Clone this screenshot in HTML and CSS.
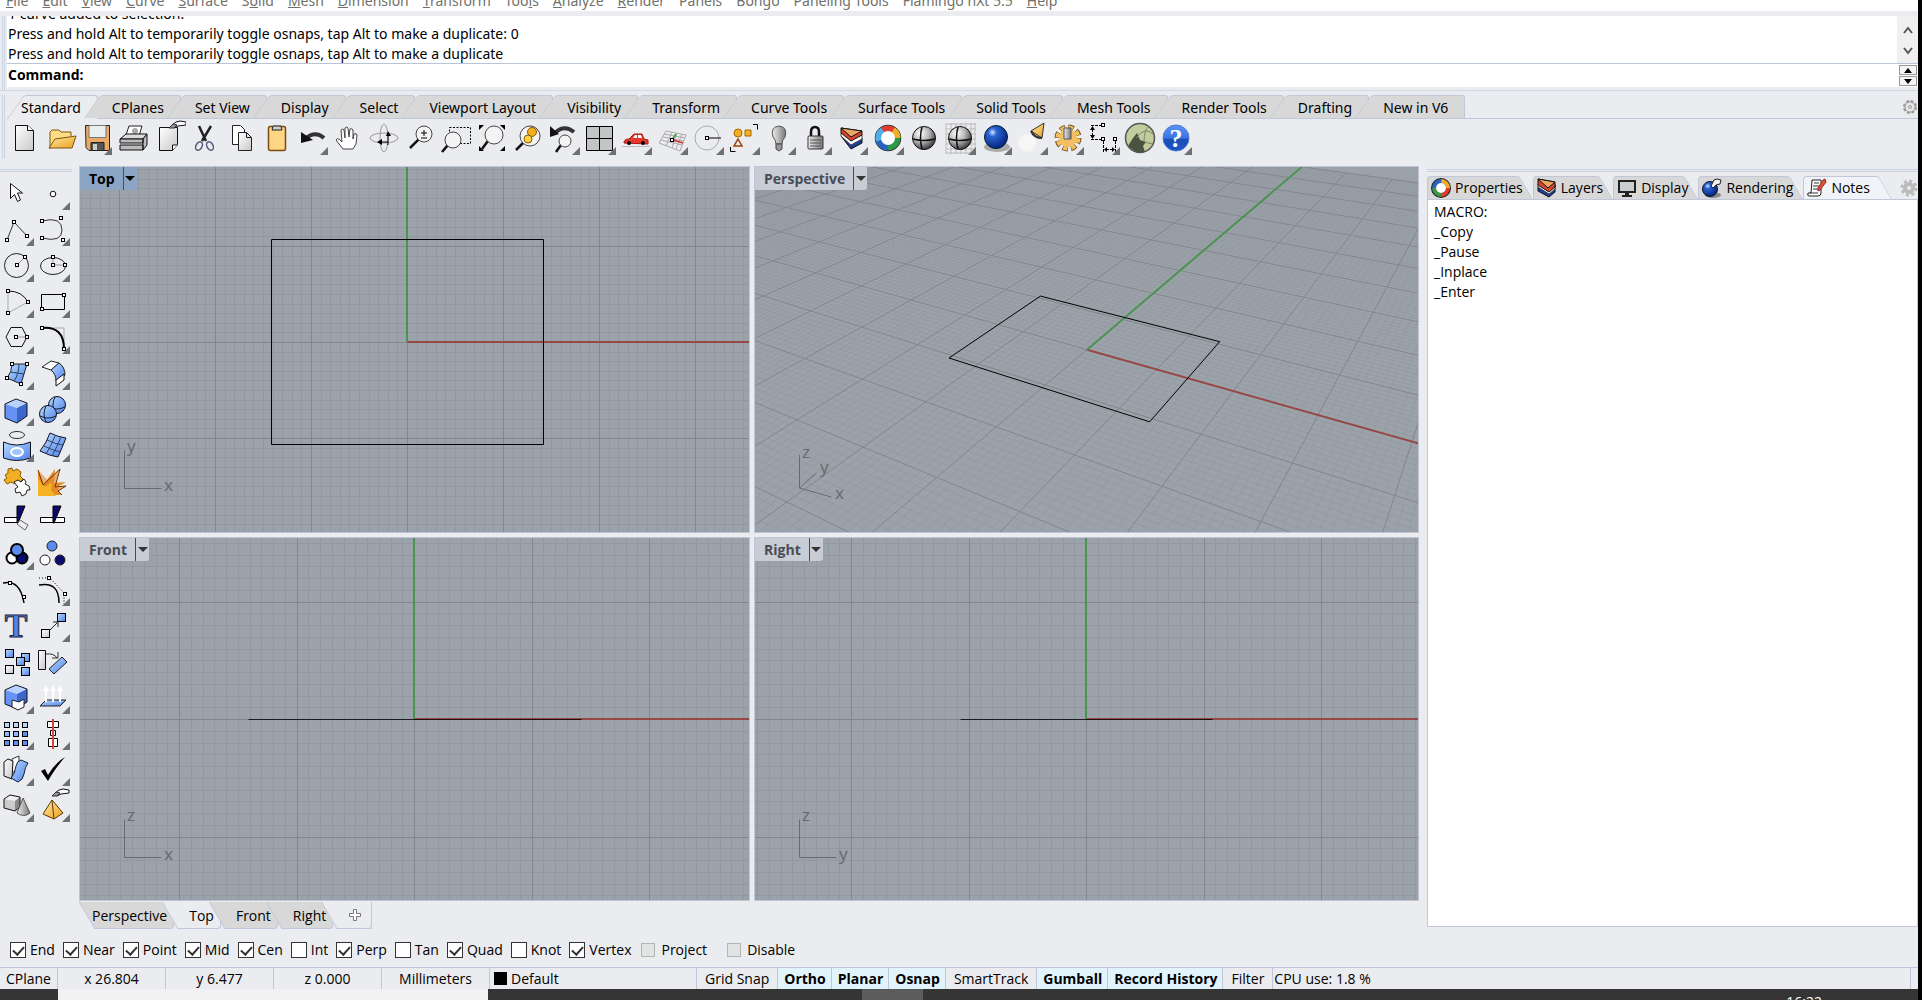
FILE: index.html
```html
<!DOCTYPE html>
<html lang="en">
<head>
<meta charset="utf-8">
<meta name="viewport" content="width=device-width, initial-scale=1">
<title>Rhino</title>
<link rel="stylesheet" href="styles.css">
</head>
<body>
<svg class="defs" width="0" height="0" aria-hidden="true">
  <defs>
    <linearGradient id="gray" x1="0" y1="0" x2="1" y2="1"><stop offset="0" stop-color="#fff"/><stop offset="1" stop-color="#c8c8c8"/></linearGradient>
    <linearGradient id="steel" x1="0" y1="0" x2="1" y2="0"><stop offset="0" stop-color="#eee"/><stop offset="1" stop-color="#777"/></linearGradient>
    <linearGradient id="blue" x1="0" y1="0" x2="1" y2="1"><stop offset="0" stop-color="#b9dcff"/><stop offset="1" stop-color="#4f80ea"/></linearGradient>
    <linearGradient id="gold" x1="0" y1="0" x2="1" y2="1"><stop offset="0" stop-color="#ffe9a6"/><stop offset="1" stop-color="#eda01c"/></linearGradient>
    <linearGradient id="help" x1="0" y1="0" x2="0" y2="1"><stop offset="0" stop-color="#5d93f5"/><stop offset=".5" stop-color="#3a74df"/><stop offset=".55" stop-color="#1b4fb8"/><stop offset="1" stop-color="#1c56c4"/></linearGradient>
    <radialGradient id="ballgray" cx=".35" cy=".3" r=".75"><stop offset="0" stop-color="#fff"/><stop offset=".5" stop-color="#b5b5b5"/><stop offset="1" stop-color="#333"/></radialGradient>
    <radialGradient id="ballblue" cx=".35" cy=".3" r=".75"><stop offset="0" stop-color="#cfe2ff"/><stop offset=".25" stop-color="#2a62d0"/><stop offset="1" stop-color="#04207a"/></radialGradient>
  </defs>
</svg>

<nav class="menubar">
  <a href="#"><u>F</u>ile</a>
  <a href="#"><u>E</u>dit</a>
  <a href="#"><u>V</u>iew</a>
  <a href="#"><u>C</u>urve</a>
  <a href="#"><u>S</u>urface</a>
  <a href="#">S<u>o</u>lid</a>
  <a href="#"><u>M</u>esh</a>
  <a href="#"><u>D</u>imension</a>
  <a href="#"><u>T</u>ransform</a>
  <a href="#">Too<u>l</u>s</a>
  <a href="#"><u>A</u>nalyze</a>
  <a href="#"><u>R</u>ender</a>
  <a href="#">Panels</a>
  <a href="#">Bongo</a>
  <a href="#">Paneling Tools</a>
  <a href="#">Flamingo nXt 5.5</a>
  <a href="#"><u>H</u>elp</a>
</nav>

<section class="command">
  <div class="history">
    <div class="lines">
      <p>1 curve added to selection.</p>
      <p>Press and hold Alt to temporarily toggle osnaps, tap Alt to make a duplicate: 0</p>
      <p>Press and hold Alt to temporarily toggle osnaps, tap Alt to make a duplicate</p>
    </div>
    <div class="scroll">
      <button aria-label="Scroll up"><svg width="12" height="8"><path d="M2 7L6 2L10 7"/></svg></button>
      <button aria-label="Scroll down"><svg width="12" height="8"><path d="M2 1L6 6L10 1"/></svg></button>
    </div>
  </div>
  <div class="prompt">
    <label for="cmd">Command:</label>
    <input id="cmd" type="text">
    <div class="spin">
      <button aria-label="Previous"><svg width="8" height="5"><path d="M0 5L4 0L8 5z"/></svg></button>
      <button aria-label="Next"><svg width="8" height="5"><path d="M0 0L4 5L8 0z"/></svg></button>
    </div>
  </div>
</section>

<section class="toolbars">
  <div class="tabs top-tabs">
    <button class="tab active">Standard</button>
    <button class="tab">CPlanes</button>
    <button class="tab">Set View</button>
    <button class="tab">Display</button>
    <button class="tab">Select</button>
    <button class="tab">Viewport Layout</button>
    <button class="tab">Visibility</button>
    <button class="tab">Transform</button>
    <button class="tab">Curve Tools</button>
    <button class="tab">Surface Tools</button>
    <button class="tab">Solid Tools</button>
    <button class="tab">Mesh Tools</button>
    <button class="tab">Render Tools</button>
    <button class="tab">Drafting</button>
    <button class="tab">New in V6</button>
    <button class="options" aria-label="Toolbar options"><svg width="16" height="16" viewBox="0 0 16 16"><circle cx="8" cy="8" r="6" fill="none" stroke="#999" stroke-width="2" stroke-dasharray="3 1.7"/><circle cx="8" cy="8" r="5" fill="#e8e8e8" stroke="#999"/><circle cx="8" cy="8" r="1.5" fill="none" stroke="#999"/></svg></button>
  </div>
  <div class="toolbar" id="toolbar"></div>
</section>

<main class="work">
  <aside class="sidebar"><div class="tools" id="tools"></div></aside>

  <div class="center">
    <div class="viewports">
      <section class="viewport active">
        <svg class="scene" id="top"></svg>
        <div class="title"><button>Top</button><button class="drop" aria-label="Top menu"></button></div>
      </section>
      <section class="viewport">
        <svg class="scene" id="perspective"></svg>
        <div class="title"><button>Perspective</button><button class="drop" aria-label="Perspective menu"></button></div>
      </section>
      <section class="viewport">
        <svg class="scene" id="front"></svg>
        <div class="title"><button>Front</button><button class="drop" aria-label="Front menu"></button></div>
      </section>
      <section class="viewport">
        <svg class="scene" id="right"></svg>
        <div class="title"><button>Right</button><button class="drop" aria-label="Right menu"></button></div>
      </section>
    </div>
    <div class="tabs view-tabs">
      <button class="tab">Perspective</button>
      <button class="tab active">Top</button>
      <button class="tab">Front</button>
      <button class="tab">Right</button>
      <button class="tab add" aria-label="New viewport"><svg width="12" height="12" viewBox="0 0 12 12"><path d="M4.500.5h3v4h4v3h-4v4h-3v-4h-4v-3h4z" fill="#fff" stroke="#777"/></svg></button>
    </div>
  </div>

  <aside class="panel">
    <div class="tabs panel-tabs">
      <button class="tab"><svg width="20" height="20" viewBox="0 0 20 20"><g fill="none" stroke-width="4"><circle cx="10" cy="10" r="7" stroke="#222" stroke-width="6"/><circle cx="10" cy="10" r="7" stroke="#e23b2e" stroke-dasharray="11 33"/><circle cx="10" cy="10" r="7" stroke="#3b9a45" stroke-dasharray="11 33" stroke-dashoffset="-11"/><circle cx="10" cy="10" r="7" stroke="#2b63c4" stroke-dasharray="11 33" stroke-dashoffset="-22"/><circle cx="10" cy="10" r="7" stroke="#f0ad28" stroke-dasharray="11 33" stroke-dashoffset="-33"/></g><circle cx="10" cy="10" r="5" fill="#fff"/></svg>Properties</button>
      <button class="tab"><svg width="20" height="20" viewBox="0 0 20 20"><path d="M1 8v5l11 6 6-5V7z" fill="#1d3f9c" stroke="#111"/><path d="M1 6v3l11 7 6-5V6z" fill="#fff" stroke="#444"/><path d="M1 1v6l11 7 6-5V4z" fill="#d8432b" stroke="#111"/><path d="M1 1l10 9 7-6z" fill="#f0a55d" stroke="#111"/></svg>Layers</button>
      <button class="tab"><svg width="20" height="20" viewBox="0 0 20 20"><path d="M1 2h18v13H1z" fill="#222"/><path d="M3 4h14v9H3z" fill="#c9ced0"/><path d="M8 15h4v2h3v2H5v-2h3z" fill="#222"/></svg>Display</button>
      <button class="tab"><svg width="20" height="20" viewBox="0 0 20 20"><ellipse cx="11" cy="17" rx="8" ry="3" fill="#888"/><circle cx="8" cy="11" r="7.500" fill="url(#ballblue)" stroke="#112"/><path d="M9 8l3-6 3-1 4 1-1 4-4 1-3 3z" fill="#eee" stroke="#222"/></svg>Rendering</button>
      <button class="tab active"><svg width="20" height="20" viewBox="0 0 20 20"><path d="M5 2h9v13q0 3-3 3H2q-2 0-1-3h3z" fill="#fff" stroke="#222"/><path d="M7 5h5M6 8h6M6 11h5M3 15h8" stroke="#333" fill="none"/><path d="M18 1l1 3-6 8-2 1 0-3 5-8z" fill="#e0562a" stroke="#923"/></svg>Notes</button>
      <button class="options" aria-label="Panel options"><svg width="18" height="18" viewBox="0 0 18 18"><circle cx="9" cy="9" r="7" fill="none" stroke="#bbb" stroke-width="3" stroke-dasharray="3 2.5"/><circle cx="9" cy="9" r="4" fill="none" stroke="#bbb" stroke-width="4"/></svg></button>
    </div>
    <textarea class="notes" aria-label="Notes" spellcheck="false">MACRO:
_Copy
_Pause
_Inplace
_Enter</textarea>
  </aside>
</main>

<section class="osnap">
  <label><input type="checkbox" checked>End</label>
  <label><input type="checkbox" checked>Near</label>
  <label><input type="checkbox" checked>Point</label>
  <label><input type="checkbox" checked>Mid</label>
  <label><input type="checkbox" checked>Cen</label>
  <label><input type="checkbox">Int</label>
  <label><input type="checkbox" checked>Perp</label>
  <label><input type="checkbox">Tan</label>
  <label><input type="checkbox" checked>Quad</label>
  <label><input type="checkbox">Knot</label>
  <label><input type="checkbox" checked>Vertex</label>
  <label class="dim"><input type="checkbox">Project</label>
  <label class="dim"><input type="checkbox">Disable</label>
</section>

<footer class="status">
  <button class="plane">CPlane</button>
  <span class="coord">x 26.804</span>
  <span class="coord">y 6.477</span>
  <span class="coord">z 0.000</span>
  <button class="coord">Millimeters</button>
  <button class="layer"><i></i>Default</button>
  <button>Grid Snap</button>
  <button class="on">Ortho</button>
  <button class="on">Planar</button>
  <button class="on">Osnap</button>
  <button>SmartTrack</button>
  <button class="on">Gumball</button>
  <button class="on">Record History</button>
  <button>Filter</button>
  <span class="cpu">CPU use: 1.8 %</span>
</footer>

<div class="taskbar">
  <div class="search"></div>
  <div class="current"></div>
  <time>16:22</time>
</div>
<script src="script.js"></script>
</body>
</html>
```
FILE: styles.css
```css
* {
  box-sizing: border-box;
}
body {
  margin: 0;
  height: 100vh;
  display: flex;
  flex-direction: column;
  border-right: 4px solid #000;
  background: #ebecf0;
  color: #000;
  font: 14px/20px "Open Sans", "Noto Sans", sans-serif;
  overflow: hidden;
}
button, input, textarea {
  font: inherit;
  color: inherit;
  background: none;
  border: 0;
  padding: 0;
  margin: 0;
}
.defs {
  position: absolute;
}
.menubar, .lines, .top-tabs {
  font-family: "Noto Sans", "Open Sans", sans-serif;
}

/* menu */
.menubar {
  display: flex;
  flex: none;
  align-items: flex-end;
  gap: 14px;
  height: 11px;
  padding-left: 6px;
  background: #fff;
  overflow: hidden;
}
.menubar a {
  color: #70716c;
  text-decoration: none;
  white-space: nowrap;
}

/* command line */
.command {
  flex: none;
  margin-top: 5px;
  padding-left: 7px;
  padding-bottom: 3px;
  border-bottom: 1px solid #d4d8e4;
  background: linear-gradient(90deg, transparent 2px, #c9d3e2 2px, #c9d3e2 3px, transparent 3px, transparent 4px, #c9d3e2 4px, #c9d3e2 5px, transparent 5px);
}
.history {
  display: flex;
  height: 48px;
  background: #fff;
  border-bottom: 1px solid #b9c4d6;
}
.lines {
  flex: 1;
  display: flex;
  flex-direction: column;
  justify-content: flex-end;
  overflow: hidden;
  margin-bottom: -1px;
  padding-left: 1px;
}
.lines p {
  margin: 0;
  flex: none;
}
.scroll {
  width: 21px;
  display: flex;
  flex-direction: column;
  justify-content: space-between;
  padding: 3px 0;
  background: #f0f0f0;
}
.scroll path {
  fill: none;
  stroke: #555;
  stroke-width: 2;
}
.prompt {
  display: flex;
  height: 23px;
  padding-left: 1px;
  background: #fff;
}
.prompt label {
  font-weight: bold;
  line-height: 22px;
}
.prompt input {
  flex: 1;
  outline: 0;
}
.spin {
  width: 20px;
  padding: 1px;
  display: flex;
  flex-direction: column;
  gap: 1px;
}
.spin button {
  height: 10px;
  border: 1px solid #999;
  background: #f4f4f4;
  line-height: 0;
}

/* tabs: a slanted half and a straight half behind the text */
.tabs {
  display: flex;
}
.tab {
  position: relative;
  isolation: isolate;
  white-space: nowrap;
}
.tab::before, .tab::after {
  content: "";
  position: absolute;
  z-index: -1;
  top: 0;
  bottom: 0;
  background: #d8d8d8;
  border: 0 solid #bfc7d9;
}
.tab.active::before, .tab.active::after {
  background: #ebecf0;
}
.options {
  margin-left: auto;
  line-height: 0;
}

.toolbars {
  flex: none;
  padding: 4px 0 10px 7px;
  background: linear-gradient(90deg, transparent 2px, #c9d3e2 2px, #c9d3e2 3px, transparent 3px, transparent 4px, #c9d3e2 4px, #c9d3e2 5px, transparent 5px) 0 4px / 100% 64px no-repeat;
}
.top-tabs {
  border-bottom: 1px solid #bfc7d9;
  height: 24px;
}
.top-tabs .tab {
  padding: 2px 17px 0 14px;
}
.top-tabs .active {
  margin-bottom: -1px;
}
.top-tabs .tab::before {
  left: -14px;
  width: 44px;
  border-width: 1px 0 0 1px;
  border-radius: 3px 0 0 0;
  transform: skewX(-35deg);
  transform-origin: bottom;
}
.top-tabs .tab:first-child::before {
  left: 0;
}
.top-tabs .tab::after {
  left: 28px;
  right: 0;
  border-width: 1px 1px 0 0;
  border-radius: 0 3px 0 0;
}
.toolbar {
  display: flex;
  margin-left: -1px;
  padding-top: 1px;
}
.tool {
  width: 36px;
  height: 36px;
  line-height: 0;
}
.tool svg {
  width: 36px;
  height: 36px;
}

/* work area */
.work {
  flex: 1;
  min-height: 0;
  display: flex;
}
.sidebar {
  flex: none;
  width: 79px;
  padding-top: 3px;
}
.tools {
  display: grid;
  grid-template-columns: 36px 36px;
  border-top: 1px solid #c9d3e2;
  padding-top: 5px;
  margin-right: 7px;
  box-shadow: inset 0 1px #ebecf0, inset 0 2px #c9d3e2;
}
.center {
  flex: 1;
  display: flex;
  flex-direction: column;
  min-width: 0;
}
.viewports {
  flex: 1;
  min-height: 0;
  display: grid;
  grid-template-columns: 671fr 665fr;
  grid-template-rows: 367fr 364fr;
  gap: 4px;
}
.viewport {
  position: relative;
  min-width: 0;
  min-height: 0;
  border: 1px solid #bfc5d6;
  background: #9ca2a9;
  overflow: hidden;
}
.scene {
  position: absolute;
  inset: 0;
  width: 100%;
  height: 100%;
}
.scene text {
  font: 17px "Noto Sans", sans-serif;
  fill: #696b70;
}
.title {
  position: relative;
  display: inline-flex;
  height: 23px;
  background: #c8cdd5;
  color: #494c57;
  border-radius: 0 0 3px 0;
}
.title button {
  padding: 0 8px 0 9px;
  font-weight: bold;
  line-height: 22px;
}
.title .drop {
  width: 14px;
  padding: 0;
  display: flex;
  justify-content: center;
  align-items: center;
  border-left: 1px solid #494c57;
}
.drop::before {
  content: "";
  border: 5px solid transparent;
  border-top-color: #333;
  border-bottom: 0;
}
.active .title {
  background: #8ca5c4;
  color: #000;
}
.active .drop::before {
  border-top-color: #000;
}
.view-tabs {
  flex: none;
  height: 29px;
  padding-top: 1px;
}
.view-tabs .tab {
  height: 27px;
  padding: 1px 7px 0 15px;
}
.view-tabs .tab::before {
  left: -12px;
  width: 34px;
  border-width: 0 0 1px 1px;
  transform: skewX(30deg);
  transform-origin: top;
}
.view-tabs .tab:first-child::before {
  left: 0;
}
.view-tabs .tab:first-child {
  padding-left: 13px;
}
.view-tabs .tab::after {
  left: 20px;
  right: 0;
  border-width: 0 1px 1px 0;
  border-radius: 0 0 4px 0;
}
.view-tabs .add::before, .view-tabs .add::after {
  background: #ebecf0;
}
.view-tabs .add {
  padding: 0 11px 0 16px;
}

/* right panel */
.panel {
  flex: none;
  width: 491px;
  margin-left: 8px;
  padding-top: 3px;
  display: flex;
  flex-direction: column;
  padding-bottom: 3px;
}
.panel-tabs {
  padding-top: 6px;
  height: 30px;
  border-top: 1px solid #c9d3e2;
  box-shadow: inset 0 1px #ebecf0, inset 0 2px #c9d3e2;
}
.panel-tabs .tab {
  display: flex;
  align-items: center;
  gap: 4px;
  padding: 0 10px 0 4px;
}
.panel-tabs .tab::before {
  right: 0;
  width: 40px;
  border-width: 1px 1px 0 0;
  border-radius: 0 3px 0 0;
  transform: skewX(30deg);
  transform-origin: bottom;
}
.panel-tabs .tab::after {
  left: 0;
  right: 24px;
  border-width: 1px 0 0 1px;
  border-radius: 4px 0 0 0;
}
.panel-tabs .active {
  padding-right: 22px;
}
.panel-tabs .active::before, .panel-tabs .active::after {
  background: #f1f3f8;
}
.notes {
  flex: 1;
  padding: 2px 6px;
  background: #fff;
  border: 1px solid #bfc7d9;
  resize: none;
  outline: 0;
}

/* osnap */
.osnap {
  flex: none;
  height: 37px;
  padding: 2px 0 0 10px;
  display: flex;
  align-items: center;
  gap: 8px;
}
.osnap label {
  display: flex;
  align-items: center;
  gap: 4px;
}
.osnap input {
  appearance: none;
  width: 16px;
  height: 16px;
  border: 1px solid #333;
  background: #fff;
}
.osnap input:checked::before {
  content: "";
  display: block;
  width: 9px;
  height: 5px;
  margin: 3px 0 0 2px;
  border: solid #333;
  border-width: 0 0 2px 2px;
  transform: rotate(-48deg);
}
.osnap .dim input {
  width: 14px;
  height: 14px;
  border-color: #b4b6b4;
  background: #e2e3e3;
}
.osnap .dim {
  margin-left: 2px;
  margin-right: 10px;
  gap: 6px;
}

/* status bar */
.status {
  flex: none;
  display: flex;
  height: 22px;
  border-top: 1px solid #c0c5d9;
  line-height: 22px;
  padding-right: 7px;
}
.status > * {
  padding: 0 8px;
  border-right: 1px solid #c0c5d9;
  text-align: center;
  white-space: nowrap;
}
.status .plane {
  width: 58px;
  padding: 0;
}
.status .coord {
  width: 108px;
}
.status .layer {
  width: 207px;
  padding: 0 4px;
  display: flex;
  align-items: center;
  gap: 4px;
}
.layer i {
  width: 13px;
  height: 13px;
  background: #000;
}
.status .on {
  padding: 0 5px 0 6px;
  font-weight: bold;
  background: #e1f3fb;
}
.status .cpu {
  flex: 1;
  padding: 0 1px;
  text-align: left;
}
.taskbar {
  flex: none;
  height: 11px;
  display: flex;
  padding-left: 58px;
  background: #353535;
  overflow: hidden;
}
.search {
  width: 430px;
  background: #f1f1f1;
}
.current {
  width: 61px;
  margin-left: 374px;
  background: #5c5c5c;
}
.taskbar time {
  margin-left: auto;
  margin-right: 96px;
  padding-top: 3px;
  color: #fff;
}
```
FILE: script.js
```js
// small white grip square
function grip(x, y) {
  return `<rect x="${x - 1.5}" y="${y - 1.5}" width="3" height="3" fill="#fff" stroke="#000"/>`;
}
const flyout = '<path d="M34 27v8h-8z" fill="#6f7074"/>';
const glass = (x, y, r, hx, hy) =>
  `<path d="M${x - r * 0.7} ${y + r * 0.7}L${hx} ${hy}" stroke="#111" stroke-width="2.500"/><circle cx="${x}" cy="${y}" r="${r}" fill="#f4f4f4" stroke="#444"/>`;
const ball = '<circle cx="18" cy="18" r="11.500" fill="url(#ballgray)" stroke="#111"/><path d="M7 19q11 3 22 0M16 7q-3 11 0 22" fill="none" stroke="#111" stroke-width="1.500"/>';
const hand = '<path d="M16 6l5-4 4-1 6 1v3l-8 1-4 2z" fill="#fff" stroke="#111"/><path d="M14 8l4-4 4 1-3 3z" fill="#999" stroke="#333"/>';

// [name, drawing, has flyout]
const toolbar = [
  ["New", '<path d="M9.500 5.500h12l6 5v20h-18z" fill="url(#gray)" stroke="#111"/><path d="M21.500 5.500v5h6" fill="#fff" stroke="#111"/>'],
  ["Open", '<path d="M8 29V12l2-2h7l2 2h10v4" fill="#ffdc86" stroke="#7a5510"/><path d="M7 28l6-9 21-3-4 12z" fill="url(#gold)" stroke="#7a5510"/>'],
  ["Save", '<path d="M7.500 5.500h24v25H11l-3-3z" fill="#e8aa66" stroke="#222"/><path d="M11 5.500h17v12H11z" fill="#e9eeee" stroke="#777"/><path d="M13 22.500h13v8H13z" fill="#555" stroke="#222"/><path d="M15 24h4v6h-4z" fill="#ccc"/>', 1],
  ["Print", '<path d="M12 15l3-9h13l-3 10z" fill="#fff" stroke="#222"/><circle cx="21" cy="11" r="3" fill="#aaa"/><path d="M6 19l6-5h21l-4 5z" fill="#ddd" stroke="#111"/><path d="M6 19h23v4H6zM6 25h23v5H6zM29 19l4-5v11l-4 5z" fill="#bbb" stroke="#111"/>'],
  ["Properties", '<path d="M9.500 7.500h18v17l-5 6h-13z" fill="url(#gray)" stroke="#111"/><path d="M22.500 30v-5h5" fill="#fff" stroke="#111"/>' + '<g transform="translate(5 0)">' + hand + '</g>'],
  ["Cut", '<path d="M13 6l7 15M25 6l-9 15" stroke="#222" stroke-width="2.500"/><g fill="none" stroke="#557" stroke-width="1.500"><ellipse cx="13" cy="26" rx="3" ry="4.500" transform="rotate(30 13 26)"/><ellipse cx="24" cy="26" rx="3" ry="4.500" transform="rotate(-30 24 26)"/></g>'],
  ["Copy", '<path d="M10.500 5.500h8l4 4v15h-12z" fill="#fff" stroke="#222"/><path d="M16.500 12.500h8l5 5v13h-13z" fill="url(#gray)" stroke="#222"/><path d="M24.500 12.500v5h5" fill="none" stroke="#222"/>'],
  ["Paste", '<rect x="10.500" y="6.500" width="17" height="24" rx="2" fill="#ffd684" stroke="#7a4a10" stroke-width="1.500"/><path d="M14 10l1-4h8l1 4z" fill="#ccc" stroke="#222"/>'],
  ["Undo", '<path d="M11 19q10-9 19-1" fill="none" stroke="#333" stroke-width="4"/><path d="M7 12v11l12-3z" fill="#111"/>', 1],
  ["Pan", '<path d="M13 29l-7-9q1-3 4 0l2 2-1-12q2-2 3 0l1 8V8q2-2 3 0l1 9 1-8q2-1 3 1v9l1-5q3-1 3 1l-1 9-3 5z" fill="#fff" stroke="#444"/>'],
  ["Rotate view", '<g fill="none" stroke="#999"><ellipse cx="18" cy="18" rx="14" ry="5"/><ellipse cx="18" cy="18" rx="4" ry="14"/></g><path d="M14 22h8M22 25V14" stroke="#000"/><path d="M16 19v6l-5-3zM20 16h5l-3-5z"/>'],
  ["Zoom dynamic", glass(22, 14, 8, 8, 28) + '<path d="M19 13h6M22 10v6M19 18h6" stroke="#000"/>'],
  ["Zoom window", '<path d="M11.500 7.500h21v16h-21z" fill="none" stroke="#000" stroke-dasharray="2 1.500"/>' + glass(15, 20, 8, 4, 32)],
  ["Zoom extents", '<path d="M5 5h5l-5 5zM31 5h-5l5 5zM5 31h5l-5-5zM31 31h-5l5-5z"/>' + glass(20, 15, 9, 8, 29)],
  ["Zoom selected", glass(20, 16, 10, 6, 30) + '<circle cx="22" cy="12" r="4.500" fill="#f2b01e" stroke="#8a5a00"/><circle cx="18" cy="19" r="4" fill="#ffd24a" stroke="#8a5a00"/>'],
  ["Undo view", '<path d="M9 13q9-9 19-1" fill="none" stroke="#333" stroke-width="4"/><path d="M4 6v11l9-3z" fill="#111"/>' + glass(19, 21, 6, 10, 32), 1],
  ["4 View", '<path d="M4.500 6.500h26v24h-26z" fill="#c3c5c4" stroke="#000"/><path d="M17.500 6.500v24M4.500 18.500h26" stroke="#000"/>', 1],
  ["Car", '<path d="M4 26.500h28" stroke="#bbb"/><path d="M6 23q0-4 5-4l5-5h8l2 5 4 1v4z" fill="#e8382d" stroke="#a11"/><path d="M17 15h2v3h-4zM20 15h3l1 3h-4z" fill="#fff"/><circle cx="11" cy="23" r="2"/><circle cx="25" cy="23" r="2"/>', 1],
  ["CPlane", '<path d="M12 11l20 4-6 16-21-8zM7 20l21 5M9 17l21 4M10 14l21 4M18 12l-6 14M23 13l-5 15M28 14l-6 15" fill="none" stroke="#aaa"/><path d="M18 20l4-6" stroke="#3a9a3a" stroke-width="1.500"/><path d="M19 20l10 3" stroke="#c33" stroke-width="1.500"/>' + grip(18, 20), 1],
  ["Circle center", '<circle cx="17" cy="18" r="12" fill="none" stroke="#aaa"/><path d="M18 18h13" stroke="#000"/>' + grip(17, 18), 1],
  ["Select", '<path d="M27 4.500h4.500v5M4.500 27v4.500h5" fill="none" stroke="#000"/><circle cx="12" cy="13" r="4" fill="#f2b01e" stroke="#a60"/><path d="M19 10h6v6h-6z" fill="#f2b01e" stroke="#a60"/><path d="M12 19l4 7H8z" fill="none" stroke="#a04000" stroke-width="1.500"/>', 1],
  ["Lights", '<path d="M14 24q0-4-3-7-3-10 6-11 9 1 6 11-3 3-3 7z" fill="url(#steel)" stroke="#555"/><path d="M14 24h6v5l-3 2-3-2z" fill="#999" stroke="#444"/>', 1],
  ["Lock", '<path d="M13 17v-5q0-5 4-5t4 5v5" fill="none" stroke="#111" stroke-width="2.500"/><rect x="10" y="16" width="15" height="13" rx="1" fill="url(#steel)" stroke="#333"/><path d="M12 20h11M12 23h11M12 26h11" stroke="#555"/>', 1],
  ["Layers", '<path d="M7 16l10 13 11-6v-5L17 20z" fill="#1d3f9c" stroke="#111"/><path d="M7 13v3l10 9 11-6v-4z" fill="#fff" stroke="#444"/><path d="M7 8v5l10 8 11-6v-4z" fill="#d8432b" stroke="#111"/><path d="M7 8l10 9 11-6z" fill="#e9a765" stroke="#111"/>', 1],
  ["Color wheel", '<g fill="none" stroke-width="6"><circle cx="18" cy="18" r="9.500" stroke="#222" stroke-width="7.500"/><circle cx="18" cy="18" r="9.500" stroke="#2a9a4a"/><circle cx="18" cy="18" r="9.500" stroke="#2b63c4" stroke-dasharray="15 45" stroke-dashoffset="-15"/><circle cx="18" cy="18" r="9.500" stroke="#52aee8" stroke-dasharray="12 48" stroke-dashoffset="-27"/><circle cx="18" cy="18" r="9.500" stroke="#e23b2e" stroke-dasharray="12 48" stroke-dashoffset="-39"/><circle cx="18" cy="18" r="9.500" stroke="#f0ad28" stroke-dasharray="10 50" stroke-dashoffset="-50"/></g><circle cx="18" cy="18" r="7" fill="#fff"/>', 1],
  ["Shade", ball],
  ["Shade options", '<path d="M4 4h30M4 9h30M4 14h30M4 19h30M4 24h30M4 29h30M4 33h30M4 3v31M9 3v31M14 3v31M19 3v31M24 3v31M29 3v31M33 3v31" stroke="#bbb"/>' + ball, 1],
  ["Render", '<ellipse cx="19" cy="27" rx="13" ry="5" fill="#aaa"/><circle cx="18" cy="17" r="11.500" fill="url(#ballblue)" stroke="#023"/>', 1],
  ["Spotlight", '<circle cx="13" cy="23" r="9" fill="#f6f6f4"/><path d="M17 11l13-8-2 15z" fill="url(#gold)" stroke="#333"/><path d="M17 11q3 7 11 7" fill="none" stroke="#333" stroke-width="2"/>', 1],
  ["Options", '<circle cx="18" cy="18" r="10" fill="none" stroke="#754f16" stroke-width="7" stroke-dasharray="5 2.854"/><circle cx="18" cy="18" r="10" fill="none" stroke="#f2c063" stroke-width="5" stroke-dasharray="4 3.854" stroke-dashoffset="-.5"/><circle cx="18" cy="18" r="9" fill="#f2c063"/><path d="M14 8h7v11h-7z" fill="url(#steel)" stroke="#555"/>', 1],
  ["Dimension", '<path d="M5 5.500h10M5 19.500h10M6.500 9v7M17.500 21v12M29.500 21v12M20 29.500h7" fill="none" stroke="#000" stroke-dasharray="3 1"/><path d="M4 10l2.500-4L9 10zM4 15l2.500 4L9 15zM21 27v5l-3-2.500zM26 27v5l3-2.500z"/>' + grip(17, 5) + grip(17, 19) + grip(29, 19), 1],
  ["Grasshopper", '<circle cx="18" cy="18" r="14.500" fill="#c2cc9c" stroke="#555" stroke-width="1.500"/><path d="M6 26l5-8 4-5 3 7 6 2-3 4 2 6-9 0z" fill="#4a5240"/><path d="M14 18q9-12 17-4M22 22q0-12 5-16M22 22l9 2" fill="none" stroke="#7c8768"/>'],
  ["Help", '<circle cx="18" cy="18" r="13" fill="url(#help)" stroke="#4a7ad8"/><text x="18" y="27" text-anchor="middle" font-family="Liberation Serif" font-weight="bold" font-size="26" fill="#fff">?</text>', 1],
];

const cube = (x, y, a, b, c) =>
  `<path d="M${x} ${y + 5}l11-5 11 4-10 5z" fill="${a}"/><path d="M${x} ${y + 5}l12 4v15l-12-5z" fill="${b}"/><path d="M${x + 12} ${y + 9}l10-5v13l-10 7z" fill="${c}"/><path d="M${x} ${y + 5}l11-5 11 4v13l-10 7-12-5z" fill="none" stroke="#112"/>`;
const box = (x, y, f) => `<rect x="${x}.5" y="${y}.5" width="8" height="8" fill="${f}" stroke="#000"/>`;
const globe = (x, y) => `<circle cx="${x}" cy="${y}" r="8.500" fill="url(#blue)" stroke="#112"/><path d="M${x - 8} ${y + 2}q8 4 16 0M${x - 2} ${y - 8}q-4 8 0 16" fill="none" stroke="#123"/>`;

const tools = [
  ["Select", '<path d="M10.500 8.500v15l4-4 3 7 3-1.500-3-7h5z" fill="#fff" stroke="#111"/>'],
  ["Point", '<circle cx="17" cy="19" r="2.800" fill="#fff" stroke="#111"/>', 1],
  ["Polyline", '<path d="M7 29L14 11L27 25" fill="none" stroke="#333"/>' + grip(7, 29) + grip(14, 11) + grip(27, 25), 1],
  ["Curve", '<path d="M6 10q20-5 20 9 0 13-20 8" fill="none" stroke="#333"/>' + grip(6, 10) + grip(25, 7) + grip(6, 27) + grip(27, 29), 1],
  ["Circle", '<circle cx="16.500" cy="18.500" r="12" fill="none" stroke="#222"/><path d="M17 18l8-8" stroke="#999"/>' + grip(17, 18) + grip(25, 10), 1],
  ["Ellipse", '<ellipse cx="17" cy="19" rx="12.500" ry="8.500" fill="none" stroke="#222"/><path d="M17 10v8h12" fill="none" stroke="#999"/>' + grip(17, 10) + grip(17, 18) + grip(29, 18), 1],
  ["Arc", '<path d="M8 8v22l20-11" fill="none" stroke="#aaa"/><path d="M8 8q14 0 20 11" fill="none" stroke="#111"/>' + grip(8, 8) + grip(8, 30) + grip(28, 19), 1],
  ["Rectangle", '<path d="M5.500 11.500h23v15h-23z" fill="none" stroke="#000"/>' + grip(28, 12) + grip(6, 26), 1],
  ["Polygon", '<path d="M6 18l5-9.500h11l5 9.500-5 9.500H11z" fill="none" stroke="#111"/><path d="M16 18h11" stroke="#999"/>' + grip(16, 18) + grip(27, 18), 1],
  ["Fillet", '<path d="M6 9h22v20" fill="none" stroke="#aaa"/><path d="M6 9q22-2 22 21" fill="none" stroke="#000" stroke-width="2"/>' + grip(6, 9) + grip(28, 30), 1],
  ["Surface", '<path d="M12 9h15q-3 10-6 20l-14-6q5-6 5-14z" fill="url(#blue)" stroke="#222"/><path d="M19 9q0 10-5 17M10 17l14 2" fill="none" stroke="#245"/>' + grip(12, 9) + grip(27, 9) + grip(7, 23) + grip(21, 29), 1],
  ["Loft", '<path d="M6 12l9-6 8 2-8 7z" fill="#fff" stroke="#222"/><path d="M15 15l8-7q6 4 6 12l-9 6q0-7-5-11z" fill="url(#blue)" stroke="#222"/><path d="M20 25l8-6v6l-8 6z" fill="#fff" stroke="#111"/>', 1],
  ["Box", cube(5, 8, "#b9d2fd", "#6793f4", "#3c67c8"), 1],
  ["Sphere", globe(21, 14) + globe(12, 23), 1],
  ["Project", '<ellipse cx="17" cy="8" rx="7.500" ry="3.500" fill="none" stroke="#333"/><path d="M3.500 15q13 6 27 0v16q-14 5-27 0z" fill="url(#blue)" stroke="#112"/><ellipse cx="17" cy="25" rx="6" ry="4" fill="#9cc4ff" stroke="#fff" stroke-width="2"/>', 1],
  ["Mesh", '<path d="M14 6q8 4 16 5-4 10-8 19-8-1-18-6 7-9 10-18z" fill="url(#blue)" stroke="#112"/><path d="M11 13q8 4 16 5M8 19q8 4 16 6M19 9q-4 10-9 18M25 10q-4 10-9 19" fill="none" stroke="#346"/>', 1],
  ["Join", '<path d="M5 12l3-2 0-4 4-1 1 3 4-2 4 3-1 4 3 3-3 3-3-2-2 4-4-2-4 2-3-4 3-2z" fill="#f0b021" stroke="#8a5a00"/><path d="M14 19l4-2 3 2 3-3 2 3-1 2 4 2 1 4-3 0-1 4-4 2-2-4-4 1-1-4 3-2z" fill="#fff" stroke="#222"/>'],
  ["Explode", '<path d="M2 7l6 14 11-15-1 14 12-1-9 5 4 8H2z" fill="#e48a28"/><path d="M2 16l7 8 7-5-1 8 5 6H2z" fill="#f5b426"/><path d="M2 7l5 15L24 6l-5 18 11-1-8 5 4 4" fill="#e48a28" fill-opacity=".6" stroke="#7a3400"/>'],
  ["Trim", '<path d="M4.500 18.500h13v5h-13z" fill="#fff" stroke="#000"/><path d="M17 7h8l-7 17h-1z" fill="#0b0b6e" stroke="#000"/><path d="M20 21l8 5-3 5-8-6z" fill="none" stroke="#666"/>'],
  ["Split", '<path d="M4.500 18.500h24v5h-24z" fill="#fff" stroke="#000"/><path d="M17 7h8l-7 17h-1z" fill="#0b0b6e" stroke="#000"/>'],
  ["Group", '<g stroke="#000" stroke-width="2"><circle cx="12" cy="23" r="5.500" fill="#fff"/><circle cx="22" cy="23" r="5.500" fill="#0b0b6e"/><circle cx="17" cy="15" r="6" fill="#5c8bee"/></g>', 1],
  ["Ungroup", '<g stroke="#222"><circle cx="9" cy="25" r="5" fill="#fff"/><circle cx="24" cy="25" r="5" fill="#0b0b6e"/><circle cx="16" cy="11" r="5" fill="#5c8bee"/></g>'],
  ["Edit points", '<path d="M3 12q17-4 21 20" fill="none" stroke="#000" stroke-width="1.500"/>' + grip(10, 12) + grip(24, 26)],
  ["Control points", '<path d="M3 14q20-4 20 18" fill="none" stroke="#000" stroke-width="1.500"/><path d="M3 7h11l14 15v11" fill="none" stroke="#000" stroke-dasharray="1 2"/>' + grip(13, 7) + grip(29, 23), 1],
  ["Text", '<text x="16" y="30" text-anchor="middle" font-family="Liberation Serif" font-weight="bold" font-size="34" fill="#4f82e6" stroke="#224">T</text>'],
  ["Move", '<path d="M13 24l8-8" stroke="#222"/><path d="M17 15h5v5" fill="none" stroke="#222"/>' + box(5, 22, "url(#gray)") + box(21, 6, "url(#blue)"), 1],
  ["Copy", box(5, 6, "url(#blue)") + box(21, 10, "url(#blue)") + box(16, 14, "url(#blue)") + box(5, 22, "url(#gray)") + box(21, 24, "url(#blue)")],
  ["Rotate", '<path d="M2.500 7.500h7v19h-7z" fill="url(#gray)" stroke="#111"/><path d="M10 11q8-1 11 4M22 9v6h-6" fill="none" stroke="#333"/><path d="M13 26l13-12 5 5-13 12z" fill="url(#blue)" stroke="#222"/>'],
  ["Solid edit", cube(5, 6, "#b9d2fd", "#6793f4", "#3c67c8") + '<path d="M12 21l7 2 5-3v8l-6 3-6-3z" fill="#fff" stroke="#222"/>', 1],
  ["Project up", '<path d="M4 27l6-6h20l-6 6z" fill="url(#blue)" stroke="#222"/><path d="M10 23V11M17 23V11M24 23V11" stroke="#fff" stroke-width="2"/><path d="M7 12l3-6 3 6zM14 12l3-6 3 6zM21 12l3-6 3 6z" fill="#fff"/>', 1],
  ["Array", [0, 1, 2].map(r => [0, 1, 2].map(c => `<rect x="${4.5 + c * 9}" y="${7.5 + r * 9}" width="5" height="5" stroke="#000" fill="${["#b8d8ff", "#8db8f8", "#5d8df0"][r + c > 2 ? 2 : r]}"/>`).join("")).join(""), 1],
  ["Align", '<path d="M11.500 6.500h11v6h-11zM14.500 15.500h5v5h-5zM12.500 23.500h9v8h-9z" fill="#fff" stroke="#000"/><path d="M17 4v30" stroke="#d8443a" stroke-width="2"/>', 1],
  ["Flow", '<path d="M12 8l7-3v12l-7 5z" fill="#fff" stroke="#333"/><path d="M4 11l4-3 5 2-1 18-8-3z" fill="url(#gray)" stroke="#111"/><path d="M11 27q4-4 5-12 1-5 5-6l7 3q-3 4-4 11-1 6-6 8z" fill="url(#blue)" stroke="#123"/>', 1],
  ["Check", '<path d="M5 20l4-2 3 6Q19 12 29 6 18 19 12 30z" fill="#000"/>', 1],
  ["Shade", '<path d="M4 12l6-4 10 2-5 4z" fill="#f0f0f0"/><path d="M4 12l11 2v10l-11-3z" fill="#ccc"/><path d="M15 14l5-4v10l-5 4z" fill="#888"/><path d="M4 12l6-4 10 2v10l-5 4-11-3z" fill="none" stroke="#111"/><path d="M23 11l7 15q-6 5-13 0z" fill="url(#steel)" stroke="#555"/>', 1],
  ["Render", '<path d="M16 13l11 13-9 6-11-5z" fill="url(#gold)" stroke="#5a3a00"/><path d="M16 13l2 19" stroke="#5a3a00"/>' + '<g transform="translate(2 1)">' + hand + '</g>', 1],
];

function fill(id, list) {
  document.getElementById(id).innerHTML = list.map(([name, art, more]) =>
    `<button class="tool" aria-label="${name}"><svg viewBox="0 0 36 36">${art}${more ? flyout : ""}</svg></button>`).join("");
}
fill("toolbar", toolbar);
fill("tools", tools);

const MINOR = "#91989f", MAJOR = "#84858d", GREEN = "#4a9450", RED = "#964845";
const line = (x1, y1, x2, y2) => `M${x1} ${y1}L${x2} ${y2}`;

// flat view: grid, half axes and the axis symbol in the corner
function flat(id, ox, oy, step, shape, h, v, iconY) {
  let minor = "", major = "";
  for (let i = -300; i <= 300; i++) {
    const x = Math.round(ox + i * step / 10) + 0.5, y = Math.round(oy + i * step / 10) + 0.5;
    const d = (x > 0 ? line(x, 0, x, 2000) : "") + (y > 0 ? line(0, y, 4000, y) : "");
    if (i % 10) minor += d; else major += d;
  }
  document.getElementById(id).innerHTML = `
    <g fill="none"><path d="${minor}" stroke="${MINOR}"/><path d="${major}" stroke="${MAJOR}"/>
    <path d="${line(ox, oy, 4000, oy)}" stroke="${RED}" stroke-width="2"/>
    <path d="${line(ox, 0, ox, oy)}" stroke="${GREEN}" stroke-width="2"/>
    <g transform="translate(${ox + 0.5} ${oy + 0.5})">${shape}</g>
    <path d="M44.500 ${iconY - 38}v38h37" stroke="#696b70"/></g>
    <text x="47" y="${iconY - 37}">${v}</text><text x="84" y="${iconY + 2}">${h}</text>`;
}
flat("top", 327, 175, 96, '<path d="M-136-103h272v205h-272z" stroke="#000"/>', "x", "y", 321.5);
flat("front", 334, 181, 117.5, '<path d="M-166 0H167" stroke="#000" stroke-opacity=".8"/>', "x", "z", 319.5);
flat("right", 331, 181, 117.5, '<path d="M-126 0H126" stroke="#000" stroke-opacity=".8"/>', "y", "z", 319.5);

// perspective view, built from the two vanishing points
const O = [332, 182.7], VX = [-1141, -234], VY = [822, -234];
function w(x, y) { return 1 - 0.0452 * x + 0.0782 * y; }
function project(x, y) {
  const a = -0.0452 * x, b = 0.0782 * y;
  return [0, 1].map(k => ((O[k] + a * VX[k] + b * VY[k]) / (1 + a + b)).toFixed(1)).join(" ");
}
function seg(x1, y1, x2, y2) {
  // pull the near end forward until it is in front of the camera
  const near = 0.3, w1 = w(x1, y1), w2 = w(x2, y2);
  if (w1 < near && w2 < near) return "";
  const t = (near - w1) / (w2 - w1);
  const cx = x1 + t * (x2 - x1), cy = y1 + t * (y2 - y1);
  if (w1 < near) { x1 = cx; y1 = cy; }
  if (w2 < near) { x2 = cx; y2 = cy; }
  return `M${project(x1, y1)}L${project(x2, y2)}`;
}
let minor = "", major = "";
for (let i = -100; i <= 100; i++) {
  const d = seg(i / 10, -10, i / 10, 10) + seg(-10, i / 10, 10, i / 10);
  if (i % 10) minor += d; else major += d;
}
document.getElementById("perspective").innerHTML = `
  <g fill="none"><path d="${minor}" stroke="${MINOR}" stroke-opacity=".7"/><path d="${major}" stroke="${MAJOR}"/>
  <path d="${seg(0, 0, 10, 0)}" stroke="${RED}" stroke-width="2"/>
  <path d="${seg(0, 0, 0, 10)}" stroke="${GREEN}" stroke-width="2"/>
  <path d="M${project(-1.417, 1.068)}L${project(1.417, 1.068)}L${project(1.417, -1.068)}L${project(-1.417, -1.068)}z" stroke="#000"/>
  <path d="M44.500 288v33l32 9M44.500 321l17-15" stroke="#696b70"/></g>
  <text x="47" y="291">z</text><text x="65" y="306">y</text><text x="80" y="332">x</text>`;
```
